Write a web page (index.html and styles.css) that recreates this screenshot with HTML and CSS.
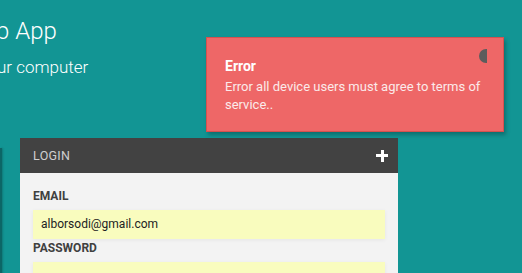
FILE: index.html
```html
<!DOCTYPE html>
<html lang="en">
<head>
    <meta charset="UTF-8">
    <meta name="viewport" content="width=device-width, initial-scale=1.0">
    <link rel="stylesheet" href="styles.css">
</head>
<body>
    <header class="hero">
        <h1>p App</h1>
        <p>ur computer</p>
    </header>

    <div class="toast">
        <span class="toast-close"></span>
        <h3>Error</h3>
        <p>Error all device users must agree to terms of service..</p>
    </div>

    <section class="main-row">
        <div class="side-panel"></div>
        <div class="login-card">
            <div class="login-head">
                <span>LOGIN</span>
                <span class="plus"></span>
            </div>
            <form class="login-body">
                <label>EMAIL</label>
                <div class="field">alborsodi@gmail.com</div>
                <label>PASSWORD</label>
                <div class="field"></div>
            </form>
        </div>
    </section>
</body>
</html>
```

FILE: styles.css
```css
body {
    font-family: Roboto, 'Liberation Sans', sans-serif;
    margin: 0;
    background-color: #129594;
    overflow: hidden;
}
.hero {
    padding-top: 16px;
    color: #fff;
}
.hero h1 {
    margin: 0 0 0 -4px;
    font-weight: 300;
    font-size: 24px;
    line-height: 30px;
}
.hero p {
    margin: 10px 0 0 -3px;
    font-weight: 300;
    font-size: 17px;
    line-height: 22px;
}
.toast {
    position: absolute;
    left: 206px;
    top: 37px;
    width: 298px;
    height: 95px;
    box-sizing: border-box;
    padding: 19px 18px 0 18px;
    background-color: #ee6767;
    border: 1px solid #d5514f;
    box-shadow: 2px 3px 4px rgba(0, 0, 0, 0.25);
    color: #fff;
}
.toast h3 {
    margin: 0;
    font-size: 14px;
    font-weight: 700;
    line-height: 18px;
}
.toast p {
    margin: 3px 0 0 0;
    font-size: 13px;
    line-height: 18px;
    color: #fbeaea;
}
.toast-close {
    position: absolute;
    left: 272px;
    top: 11px;
    width: 8px;
    height: 14px;
    background-color: #5c5c5c;
    border-radius: 8px 0 0 8px;
}
.main-row {
    display: flex;
    margin-top: 60px;
}
.side-panel {
    width: 2px;
    margin-top: 10px;
    height: 200px;
    background-color: #0c6666;
    box-shadow: 1px 0 2px rgba(0, 0, 0, 0.2);
}
.login-card {
    margin-left: 18px;
    width: 378px;
    background-color: #f3f3f3;
}
.login-head {
    display: flex;
    justify-content: space-between;
    align-items: center;
    height: 35px;
    padding: 0 10px 0 13px;
    background-color: #424242;
    color: #cfcfcf;
    font-size: 12.5px;
    letter-spacing: 0.3px;
}
.plus {
    position: relative;
    width: 12px;
    height: 12px;
}
.plus::before,
.plus::after {
    content: "";
    position: absolute;
    background-color: #fff;
}
.plus::before {
    left: 0;
    top: 4.5px;
    width: 12px;
    height: 3px;
}
.plus::after {
    left: 4.5px;
    top: 0;
    width: 3px;
    height: 12px;
}
.login-body {
    padding: 15px 13px 20px 13px;
    margin: 0;
}
.login-body label {
    display: block;
    font-size: 12px;
    font-weight: 700;
    color: #404040;
    line-height: 16px;
}
.field {
    height: 29px;
    margin: 6px 0 1px 0;
    padding: 0 8px;
    background-color: #f9fcbe;
    box-shadow: 0 1px 4px rgba(0, 0, 0, 0.06);
    font-size: 12px;
    line-height: 29px;
    color: #222;
}
```
